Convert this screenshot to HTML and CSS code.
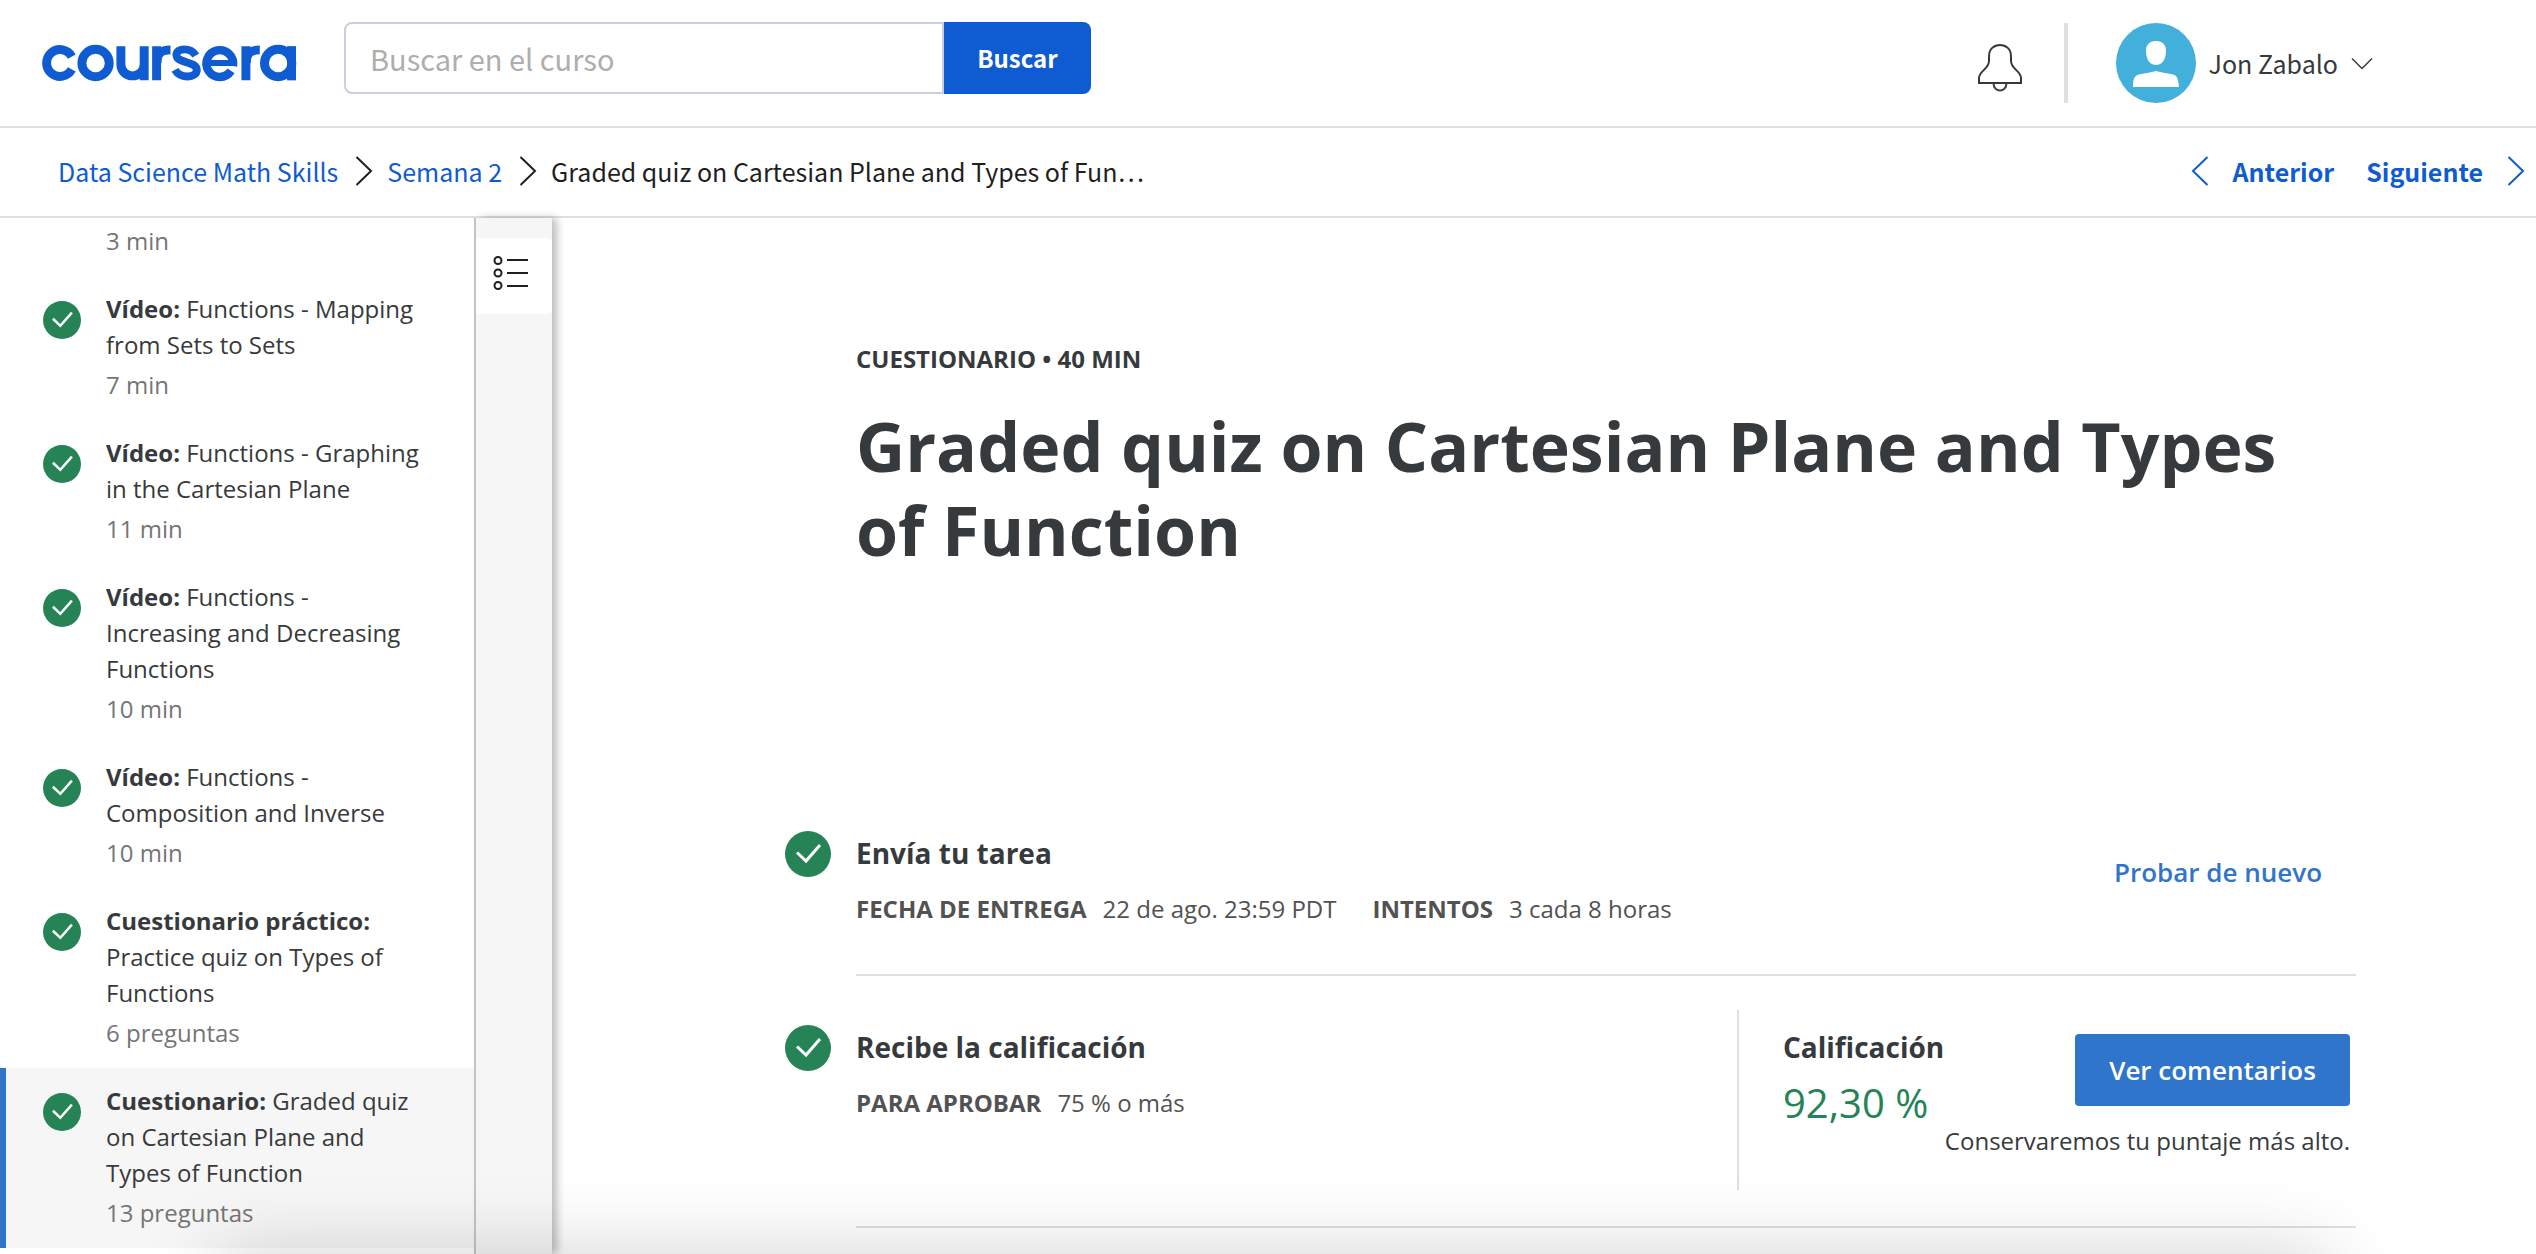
FILE: index.html
```html
<!DOCTYPE html>
<html lang="es">
<head>
<meta charset="utf-8">
<title>Graded quiz on Cartesian Plane and Types of Function | Coursera</title>
<link rel="stylesheet" href="styles.css">
</head>
<body>
<svg class="defs" width="0" height="0" aria-hidden="true">
  <symbol id="check" viewBox="0 0 46 46">
    <circle cx="23" cy="23" r="23" fill="#258355"/>
    <path d="M12 21.500 L21 30 L35 14" fill="none" stroke="#fff" stroke-width="3"/>
  </symbol>
  <symbol id="chevron" viewBox="0 0 18 32">
    <path d="M1.500 2 L16 16 L1.500 30" fill="none" stroke="currentColor" stroke-width="2"/>
  </symbol>
  <symbol id="chevron-back" viewBox="0 0 18 32">
    <path d="M16.500 2 L2 16 L16.500 30" fill="none" stroke="currentColor" stroke-width="2"/>
  </symbol>
</svg>

<header class="topbar">
  <a class="logo" href="#" aria-label="Coursera">
    <svg width="256" height="38" viewBox="0 0 258 38" fill="none" stroke="#0f5bd1" stroke-width="9">
      <path d="M31 12.500 A13.500 13.500 0 1 0 31 25.500"/>
      <circle cx="55" cy="19" r="13.800"/>
      <path d="M80.500 2 V20 C80.500 36 104 36 104 20 M104 2 V36.500"/>
      <path d="M116.500 36.500 V2 M117 19 C117 9 121 5.800 130.500 5.800"/>
      <path d="M156 11.500 C151 3 136.500 3.500 136.500 11 C136.500 19.500 157 17 157 26 C157 34.500 140 35 135 26" stroke-width="8"/>
      <path d="M165 19 H197" stroke-width="6"/>
      <path d="M193.500 22 A13.500 13.500 0 1 0 191.500 27" stroke-width="8.500"/>
      <path d="M206.500 36.500 V2 M207 19 C207 9 211 5.800 220.500 5.800"/>
      <circle cx="239" cy="19" r="13.800"/>
      <path d="M252.500 2 V36.500"/>
    </svg>
  </a>
  <form class="search" role="search">
    <input class="search-input" type="text" placeholder="Buscar en el curso" aria-label="Buscar en el curso">
    <button class="search-button" type="submit">Buscar</button>
  </form>
  <div class="account">
    <button class="bell" type="button" aria-label="Notificaciones">
      <svg width="46" height="50" viewBox="0 0 46 50" fill="none" stroke="#373a3c" stroke-width="2">
        <path d="M2 40 V35 C2 28 12 26 12 18 V13 C12 6 17 2 23 2 S34 6 34 13 V18 C34 26 44 28 44 35 V40 Z"/>
        <path d="M16.500 40 C16.500 50 29.500 50 29.500 40"/>
      </svg>
    </button>
    <span class="divider"></span>
    <button class="profile" type="button">
      <svg width="80" height="80" viewBox="0 0 80 80" aria-hidden="true">
        <circle cx="40" cy="40" r="40" fill="#43afdb"/>
        <path d="M40 18 C47 18 50.500 22.500 50 29 C49.500 37 46 42 40 42 S30.500 37 30 29 C29.500 22.500 33 18 40 18 Z" fill="#fff"/>
        <path d="M17 64 C17 54 19 52 25 51 C32 50 36 49 40 48 C44 49 48 50 55 51 C61 52 62 54 63 64 Z" fill="#fff"/>
      </svg>
      <span class="profile-name">Jon Zabalo</span>
      <svg width="22" height="14" viewBox="0 0 22 14" fill="none" stroke="#373a3c" stroke-width="1.500" aria-hidden="true"><path d="M1 2.500 L11 12.500 L21 2.500"/></svg>
    </button>
  </div>
</header>

<nav class="crumbs" aria-label="Ruta">
  <a class="crumb-link" href="#">Data Science Math Skills</a>
  <svg class="chevron" width="18" height="32"><use href="#chevron"/></svg>
  <a class="crumb-link" href="#">Semana 2</a>
  <svg class="chevron" width="18" height="32"><use href="#chevron"/></svg>
  <span class="crumb-current">Graded quiz on Cartesian Plane and Types of Fun…</span>
  <div class="pager">
    <a class="pager-link" href="#"><svg width="18" height="32"><use href="#chevron-back"/></svg>Anterior</a>
    <a class="pager-link" href="#">Siguiente<svg width="18" height="32"><use href="#chevron"/></svg></a>
  </div>
</nav>

<div class="workspace">
  <aside class="lessons">
    <ul class="lesson-list">
      <li class="lesson lesson-cut"><span class="lesson-text"><span class="lesson-meta">3 min</span></span></li>
      <li class="lesson"><svg class="lesson-check"><use href="#check"/></svg><a class="lesson-text" href="#"><span><b>Vídeo:</b> Functions - Mapping from Sets to Sets</span><span class="lesson-meta">7 min</span></a></li>
      <li class="lesson"><svg class="lesson-check"><use href="#check"/></svg><a class="lesson-text" href="#"><span><b>Vídeo:</b> Functions - Graphing in the Cartesian Plane</span><span class="lesson-meta">11 min</span></a></li>
      <li class="lesson"><svg class="lesson-check"><use href="#check"/></svg><a class="lesson-text" href="#"><span><b>Vídeo:</b> Functions - Increasing and Decreasing Functions</span><span class="lesson-meta">10 min</span></a></li>
      <li class="lesson"><svg class="lesson-check"><use href="#check"/></svg><a class="lesson-text" href="#"><span><b>Vídeo:</b> Functions - Composition and Inverse</span><span class="lesson-meta">10 min</span></a></li>
      <li class="lesson"><svg class="lesson-check"><use href="#check"/></svg><a class="lesson-text" href="#"><span><b>Cuestionario práctico:</b> Practice quiz on Types of Functions</span><span class="lesson-meta">6 preguntas</span></a></li>
      <li class="lesson lesson-active"><svg class="lesson-check"><use href="#check"/></svg><a class="lesson-text" href="#"><span><b>Cuestionario:</b> Graded quiz on Cartesian Plane and Types of Function</span><span class="lesson-meta">13 preguntas</span></a></li>
    </ul>
  </aside>
  <div class="rail">
    <button class="rail-button" type="button" aria-label="Lista de contenidos">
      <svg width="36" height="36" viewBox="0 0 36 36" fill="none" stroke="#1f1f1f" stroke-width="2">
        <circle cx="5" cy="5.500" r="3.500"/><circle cx="5" cy="18" r="3.500"/><circle cx="5" cy="30.500" r="3.500"/>
        <path d="M14 5 H35 M14 18 H35 M14 31 H35"/>
      </svg>
    </button>
  </div>
  <main class="content">
    <div class="sheet">
      <p class="kicker">CUESTIONARIO • 40 MIN</p>
      <h1 class="title">Graded quiz on Cartesian Plane and Types of Function</h1>
      <section class="step step-submit">
        <svg class="step-check"><use href="#check"/></svg>
        <div class="step-body">
          <h2 class="step-title">Envía tu tarea</h2>
          <p class="facts"><b>FECHA DE ENTREGA</b><span class="fact-value">22 de ago. 23:59 PDT</span><b>INTENTOS</b><span class="fact-value">3 cada 8 horas</span></p>
        </div>
        <button class="retry" type="button">Probar de nuevo</button>
      </section>
      <section class="step step-grade">
        <svg class="step-check"><use href="#check"/></svg>
        <div class="step-body">
          <h2 class="step-title">Recibe la calificación</h2>
          <p class="facts"><b>PARA APROBAR</b><span class="fact-value">75 % o más</span></p>
        </div>
        <div class="grade">
          <div class="grade-score">
            <h2 class="step-title">Calificación</h2>
            <p class="score">92,30 %</p>
          </div>
          <div class="grade-action">
            <button class="feedback" type="button">Ver comentarios</button>
            <p class="note">Conservaremos tu puntaje más alto.</p>
          </div>
        </div>
      </section>
    </div>
  </main>
</div>
<div class="dock-shadow"></div>
</body>
</html>
```
FILE: styles.css
```css
* { box-sizing: border-box; }
body {
  margin: 0;
  height: 100vh;
  display: flex;
  flex-direction: column;
  overflow: hidden;
  background: #fff;
  color: #373a3c;
  font-family: "Open Sans", sans-serif;
  font-size: 24px;
  line-height: 36px;
}
.defs { position: absolute; }
h1, h2, p, ul { margin: 0; padding: 0; }
ul { list-style: none; }
a { color: inherit; text-decoration: none; }
button { border: 0; padding: 0; background: none; color: inherit; font: inherit; cursor: pointer; }
svg { flex: none; display: block; }

.topbar, .crumbs {
  flex: none;
  display: flex;
  align-items: center;
  border-bottom: 2px solid #e0e0e0;
  font-family: "Noto Sans CJK JP", sans-serif;
  font-size: 25px;
}
.topbar { height: 128px; padding: 0 163px 0 41px; }
.search { display: flex; height: 72px; width: 747px; margin: 0 0 10px 47px; }
.search-input {
  flex: 1;
  min-width: 0;
  padding: 0 24px;
  border: 2px solid #c9d0db;
  border-radius: 8px 0 0 8px;
  font: inherit;
  font-size: 29px;
}
.search-input::placeholder { color: #aeaeae; opacity: 1; }
.search-button {
  width: 147px;
  border-radius: 0 8px 8px 0;
  background: #0f5bd1;
  color: #fff;
  font-size: 24px;
  font-weight: 700;
}
.account { display: flex; align-items: center; margin-left: auto; }
.bell { margin: 10px 41px 0 0; }
.divider { width: 4px; height: 80px; background: #e0e0e0; }
.profile { display: flex; align-items: center; margin-left: 48px; gap: 13px; }

.crumbs { height: 90px; padding: 0 11px 2px 58px; gap: 14px; color: #1f1f1f; }
.crumb-link, .pager-link { color: #0f5bd1; }
.crumb-link { margin-right: 3px; }
.pager { display: flex; margin-left: auto; gap: 32px; }
.pager-link { display: flex; align-items: center; gap: 24px; font-weight: 700; }

.workspace { flex: 1; min-height: 0; display: flex; }
.lessons { flex: none; width: 476px; overflow: hidden; border-right: 2px solid #c8c8c8; }
.lesson { display: flex; gap: 25px; padding: 15px 48px 17px 43px; }
.lesson-cut { padding: 5px 48px 17px 106px; }
.lesson-active { background: #f6f6f6; box-shadow: inset 6px 0 #2f75cb; }
.lesson-check { width: 38px; height: 38px; margin-top: 10px; }
.lesson-text { flex: 1; display: flex; flex-direction: column; gap: 4px; }
.lesson-meta { color: #757575; }

.rail { flex: none; width: 76px; padding-top: 20px; background: #f6f6f6; box-shadow: 5px 0 8px rgba(0, 0, 0, .26); }
.rail-button { display: flex; justify-content: center; align-items: center; width: 100%; height: 76px; border-radius: 4px; background: #fff; padding: 0 6px 6px 0; }

.content { flex: 1; min-width: 0; padding: 123px 180px 0 304px; }
.kicker { font-weight: 700; }
.title { margin-top: 27px; font-size: 68px; line-height: 84px; font-weight: 700; }
.step { display: flex; align-items: flex-start; border-bottom: 2px solid #e0e0e0; }
.step-submit { margin-top: 259px; padding-bottom: 47px; }
.step-grade { padding: 34px 0 36px; }
.step-check { width: 46px; height: 46px; margin: 0 25px 0 -71px; }
.step-grade > .step-check, .step-grade > .step-body { margin-top: 15px; }
.step-body { flex: 1; }
.step-title { font-size: 28px; line-height: 44px; font-weight: 700; }
.facts { display: flex; margin-top: 16px; color: #525252; }
.facts b { margin-right: 16px; }
.fact-value { margin-right: 36px; }
.retry { margin: 23px 34px 0 0; color: #2f75cb; font-size: 26px; font-weight: 600; }
.grade {
  display: flex;
  justify-content: space-between;
  width: 619px;
  height: 180px;
  padding: 15px 6px 0 44px;
  border-left: 2px solid #e0e0e0;
}
.grade-score { flex: none; width: 160px; }
.score { margin-top: 10px; font-size: 40px; line-height: 48px; color: #258355; white-space: nowrap; }
.grade-action { display: flex; flex-direction: column; align-items: flex-end; gap: 17px; margin-top: 9px; }
.feedback { width: 275px; height: 72px; border-radius: 4px; background: #2f75cb; color: #fff; font-size: 26px; font-weight: 600; }
.note { white-space: nowrap; }

.dock-shadow {
  position: fixed;
  left: 220px;
  right: 210px;
  top: 100%;
  height: 200px;
  box-shadow: 0 0 80px rgba(0, 0, 0, .18);
  pointer-events: none;
}
```
